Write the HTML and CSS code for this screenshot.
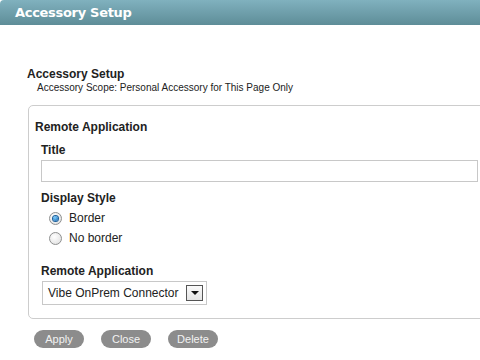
FILE: index.html
```html
<!DOCTYPE html>
<html>
<head>
<meta charset="utf-8">
<link rel="stylesheet" href="styles.css">
</head>
<body>
<div class="header">Accessory Setup</div>
<div class="content">
  <div class="heading">Accessory Setup</div>
  <div class="scope">Accessory Scope: Personal Accessory for This Page Only</div>
  <div class="box">
    <div class="legend">Remote Application</div>
    <div class="label">Title</div>
    <div class="input"></div>
    <div class="label ds">Display Style</div>
    <div class="radios">
      <div class="radio-row"><span class="radio checked"></span><span>Border</span></div>
      <div class="radio-row"><span class="radio"></span><span>No border</span></div>
    </div>
    <div class="label ra">Remote Application</div>
    <div class="select">
      <span class="select-text">Vibe OnPrem Connector</span>
      <span class="arrow"><span class="tri"></span></span>
    </div>
  </div>
  <div class="buttons">
    <span class="btn">Apply</span>
    <span class="btn">Close</span>
    <span class="btn">Delete</span>
  </div>
</div>
</body>
</html>
```
FILE: styles.css
```css
html, body {
  margin: 0;
  padding: 0;
  background: #fff;
  overflow: hidden;
  width: 480px;
  height: 360px;
  font-family: "Liberation Sans", Arial, sans-serif;
  color: #222;
}
.header {
  height: 25px;
  box-sizing: border-box;
  padding: 5px 0 0 15px;
  background: linear-gradient(#80b1be, #5e8d98);
  border-top-left-radius: 4px;
  color: #fff;
  font-family: "DejaVu Sans", Verdana, sans-serif;
  font-weight: bold;
  font-size: 13px;
  letter-spacing: -0.3px;
  line-height: 16px;
}
.content {
  padding: 42px 0 0 27px;
}
.heading {
  font-weight: bold;
  font-size: 12px;
  line-height: 14px;
}
.scope {
  font-size: 10px;
  line-height: 12px;
  margin: 1px 0 0 10px;
}
.box {
  margin: 11px -11px 0 1px;
  border: 1px solid #cdcdcd;
  border-radius: 5px 0 0 5px;
  padding: 14px 12px 13px 12px;
}
.legend {
  font-weight: bold;
  font-size: 12px;
  line-height: 14px;
  margin-left: -6px;
}
.label {
  font-weight: bold;
  font-size: 12px;
  line-height: 14px;
  margin-top: 9px;
}
.input {
  height: 22px;
  box-sizing: border-box;
  border: 1px solid #c8c8c8;
  margin-top: 3px;
}
.label.ds { margin-top: 9px; }
.radios {
  display: flex;
  flex-direction: column;
  gap: 6px;
  margin: 6px 0 0 8px;
  font-size: 12px;
  line-height: 14px;
}
.radio-row {
  display: flex;
  align-items: center;
  gap: 7px;
}
.radio {
  width: 11px;
  height: 11px;
  border-radius: 50%;
  border: 1px solid #8e8f8f;
  background: radial-gradient(circle at 40% 35%, #fff, #dcdcdc);
  display: flex;
  align-items: center;
  justify-content: center;
}
.radio.checked::after {
  content: "";
  width: 5px;
  height: 5px;
  border-radius: 50%;
  background: radial-gradient(circle at 40% 35%, #7fd0ff, #0a5aa8);
  box-shadow: 0 0 0 1px #1c5f9a;
}
.label.ra { margin-top: 19px; }
.select {
  display: flex;
  align-items: center;
  width: 165px;
  height: 24px;
  box-sizing: border-box;
  border: 1px solid #c8c8c8;
  margin: 3px 0 0 1px;
  padding: 0 3px 0 5px;
  font-size: 12px;
  justify-content: space-between;
}
.arrow {
  width: 15px;
  height: 14px;
  border: 1px solid #555;
  background: linear-gradient(#fafafa, #e4e4e4);
  display: flex;
  align-items: center;
  justify-content: center;
}
.tri {
  width: 0;
  height: 0;
  border-left: 4px solid transparent;
  border-right: 4px solid transparent;
  border-top: 4px solid #111;
}
.buttons {
  display: flex;
  gap: 17px;
  margin: 11px 0 0 7px;
}
.btn {
  width: 50px;
  height: 18px;
  border-radius: 9px;
  background: #8c8c8c;
  color: #f2f2f2;
  font-size: 11px;
  line-height: 18px;
  text-align: center;
}
```
